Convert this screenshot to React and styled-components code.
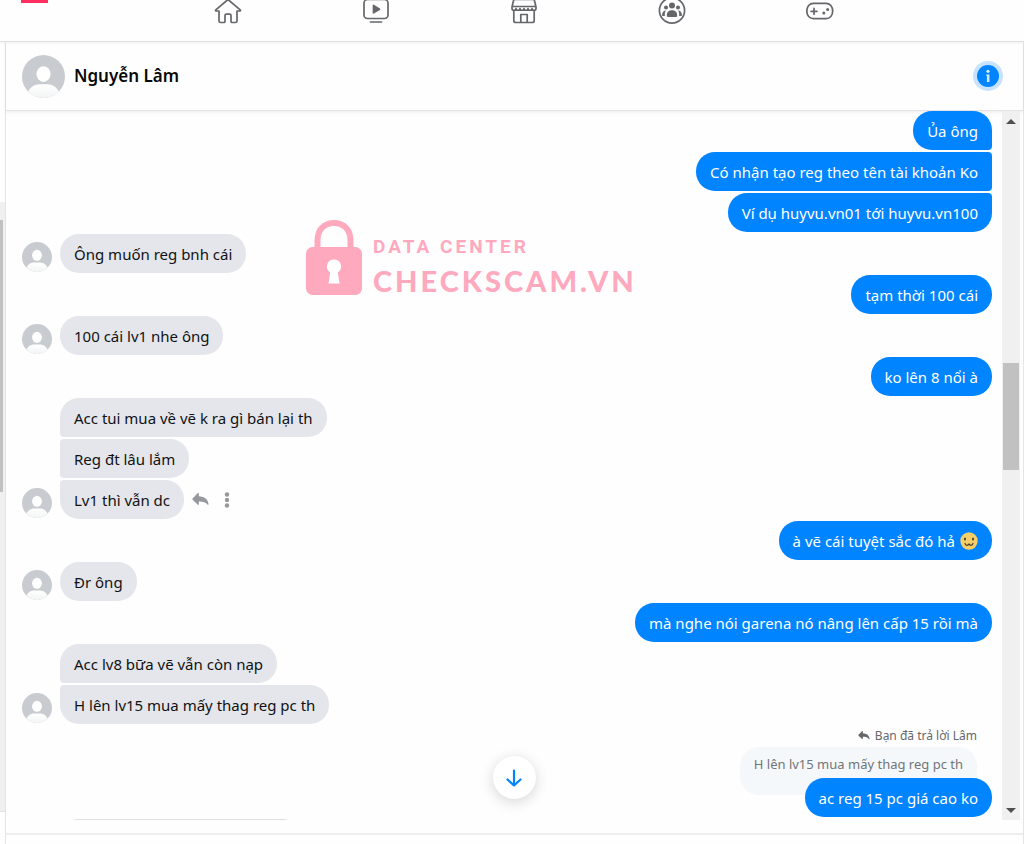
import React from "react";
import styled, { createGlobalStyle, css } from "styled-components";

const GlobalStyle = createGlobalStyle`
  * { box-sizing: border-box; }
  body {
    margin: 0;
    background: #fefefe;
    color: #111;
    font-family: "Noto Sans", "Open Sans", sans-serif;
    font-size: 15px;
  }
  button { font: inherit; border: 0; padding: 0; background: none; cursor: pointer; }
`;

const Page = styled.div`
  display: flex;
  flex-direction: column;
  height: 100vh;
  overflow: hidden;
`;

const TopBar = styled.header`
  display: grid;
  grid-template-columns: 1fr auto 1fr;
  align-items: start;
  height: 42px;
  flex: none;
  padding-left: 21px;
  border-bottom: 1px solid #e2e2e4;
  box-shadow: 0 1px 3px rgba(0, 0, 0, 0.06);
`;

const BrandStrip = styled.div`
  width: 27px;
  height: 3px;
  background: #ff2d60;
`;

const Nav = styled.nav`
  display: grid;
  grid-template-columns: repeat(5, 148px);
  grid-template-rows: 24px;
  align-items: end;
  padding-left: 3px;
`;

const NavLink = styled.a`
  display: flex;
  justify-content: center;
  height: 28px;
  color: #65676b;
`;

const NavIcon = styled.svg`
  width: 28px;
  height: 28px;
  fill: none;
  stroke: currentColor;
  stroke-width: 1.7;
  stroke-linecap: round;
  stroke-linejoin: round;
`;

const Body = styled.div`
  display: flex;
  flex: 1;
  min-height: 0;
`;

const Rail = styled.aside`
  width: 6px;
  flex: none;
  padding: 160px 0 32px;
  border-right: 1px solid #e4e4e6;
`;

const RailTrack = styled.div`
  height: 100%;
  padding-top: 18px;
  background: #f0f0f0;
  border-bottom: 1px solid #e2e2e2;
`;

const RailThumb = styled.div`
  width: 3px;
  height: 46%;
  background: #c1c1c1;
`;

const Chat = styled.main`
  display: flex;
  flex-direction: column;
  flex: 1;
  min-width: 0;
  border-right: 1px solid #e6e6e8;
`;

const ChatHeader = styled.div`
  display: flex;
  align-items: center;
  gap: 9px;
  height: 69px;
  flex: none;
  padding: 0 20px 0 16px;
  border-bottom: 1px solid #e4e4e6;
  box-shadow: 0 1px 3px rgba(0, 0, 0, 0.08);
`;

const Name = styled.h1`
  flex: 1;
  margin: 0;
  font-size: 17px;
  line-height: 24px;
  font-weight: 600;
  color: #080809;
`;

const InfoButton = styled.button`
  display: flex;
  width: 30px;
  height: 30px;
  border-radius: 50%;
  background: #c8e3ff;
  align-items: center;
  justify-content: center;
`;

const Conversation = styled.div`
  position: relative;
  display: flex;
  flex: 1;
  min-height: 0;
`;

const Messages = styled.div`
  display: flex;
  flex-direction: column;
  gap: 2px;
  flex: 1;
  min-width: 0;
  overflow: hidden;
  padding: 0 10px 0 16px;
`;

const Row = styled.div`
  display: flex;
  flex: none;
  align-items: flex-end;
  gap: 8px;
  justify-content: ${(p) => (p.$mine ? "flex-end" : "flex-start")};
`;

const AvatarSlot = styled.div`
  width: 30px;
  height: 30px;
  flex: none;
  margin-bottom: 1px;
`;

const corners = {
  single: () => "19px",
  first: (mine) => (mine ? "19px 19px 4px 19px" : "19px 19px 19px 4px"),
  middle: (mine) => (mine ? "19px 4px 4px 19px" : "4px 19px 19px 4px"),
  last: (mine) => (mine ? "19px 4px 19px 19px" : "4px 19px 19px 19px"),
};

const Bubble = styled.div`
  display: flex;
  align-items: center;
  gap: 5px;
  height: 39px;
  padding: 0 14px;
  line-height: 22px;
  white-space: nowrap;
  border-radius: ${(p) => corners[p.$place](p.$mine)};
  ${(p) =>
    p.$mine
      ? css`
          background: #0084ff;
          color: #fff;
          position: relative;
        `
      : css`
          background: #e4e6eb;
          color: #111214;
        `}
`;

const RowActions = styled.div`
  display: flex;
  align-items: center;
  gap: 13px;
  height: 39px;
  color: #96989b;
`;

const IconButton = styled.button`
  display: flex;
  color: inherit;
`;

const Reply = styled.div`
  display: flex;
  flex: none;
  flex-direction: column;
  align-items: flex-end;
`;

const ReplyLabel = styled.div`
  display: flex;
  align-items: center;
  gap: 5px;
  height: 19px;
  margin-right: 15px;
  font-size: 12px;
  color: #65676b;
`;

const Quote = styled.div`
  height: 48px;
  margin: 2px 15px -17px 0;
  padding: 7px 14px;
  border-radius: 19px;
  background: #f4f8fa;
  color: #727579;
  font-size: 13px;
  line-height: 20px;
  white-space: nowrap;
`;

const CardOutline = styled.div`
  flex: none;
  width: 242px;
  height: 60px;
  margin-left: 38px;
  border: 1px solid #dedede;
  border-radius: 19px;
`;

const Scrollbar = styled.div`
  display: flex;
  flex-direction: column;
  width: 18px;
  flex: none;
  margin-right: 3px;
  padding: 0 1px;
  background: #f0f0f0;
`;

const ScrollArrow = styled.button`
  display: flex;
  align-items: center;
  justify-content: center;
  height: 20px;
`;

const ScrollPart = styled.div`
  flex: ${(p) => p.$grow} 1 0;
  background: ${(p) => (p.$thumb ? "#c1c1c1" : "transparent")};
`;

const JumpButton = styled.button`
  position: absolute;
  bottom: 21px;
  left: calc(50% - 22px);
  display: flex;
  align-items: center;
  justify-content: center;
  width: 43px;
  height: 43px;
  border-radius: 50%;
  background: #fff;
  box-shadow: 0 3px 14px rgba(0, 0, 0, 0.16);
`;

const Composer = styled.footer`
  height: 24px;
  flex: none;
  padding-top: 13px;
`;

const ComposerRule = styled.div`
  height: 2px;
  background: #eeeeef;
`;

const Watermark = styled.div`
  position: absolute;
  top: 109px;
  left: 300px;
  display: flex;
  gap: 11px;
  color: #ffa9bf;
  pointer-events: none;
`;

const WatermarkText = styled.div`
  display: flex;
  flex-direction: column;
  padding-top: 16px;
`;

const WatermarkSmall = styled.span`
  font-family: Roboto, sans-serif;
  font-size: 19px;
  line-height: 22px;
  font-weight: 700;
  letter-spacing: 3px;
`;

const WatermarkLarge = styled.span`
  font-family: Lato, sans-serif;
  font-size: 29px;
  line-height: 46px;
  font-weight: 900;
  letter-spacing: 3px;
`;

function Avatar({ size }) {
  const id = "face" + size;
  return (
    <svg width={size} height={size} viewBox="0 0 44 44" aria-hidden="true">
      <defs>
        <clipPath id={id}>
          <circle cx="22" cy="22" r="22" />
        </clipPath>
        <linearGradient id={id + "fade"} x1="0" y1="0" x2="0" y2="1">
          <stop offset="0" stopColor="#fff" />
          <stop offset="1" stopColor="#f3f4f5" />
        </linearGradient>
      </defs>
      <g clipPath={`url(#${id})`}>
        <rect width="44" height="44" fill="#c8cbd0" />
        <ellipse cx="22" cy="19.500" rx="7.200" ry="8" fill="#fff" />
        <path d="M6 44V39c1.500-6 7-9 12-9h8c5 0 10.500 3 12 9v5z" fill={`url(#${id}fade)`} />
      </g>
    </svg>
  );
}

function ReplyArrow({ width, height }) {
  return (
    <svg width={width} height={height} viewBox="0 0 18 14" fill="currentColor" aria-hidden="true">
      <path d="M7.200.6v3c6.200.2 9.800 3.400 10.500 8.400-.1.800-.7.900-1.200.3-2.300-2.500-5-3.300-9.300-3.200v3c0 .7-.6.900-1.100.500L.5 7.200c-.4-.4-.4-.9 0-1.200L6.100.1c.5-.5 1.100-.2 1.100.5z" />
    </svg>
  );
}

function CatFace() {
  return (
    <svg width="18" height="18" viewBox="0 0 18 18" role="img" aria-label=":3">
      <circle cx="9" cy="9" r="8.700" fill="#f6cf68" />
      <ellipse cx="5" cy="7" rx="1" ry="1.500" fill="#4a3b2b" />
      <ellipse cx="13" cy="7" rx="1" ry="1.500" fill="#4a3b2b" />
      <path d="M5 11.300c.2 2.600 3.600 2.600 4 .4.400 2.200 3.800 2.200 4-.4" fill="none" stroke="#4a3b2b" strokeWidth="1.200" strokeLinecap="round" />
    </svg>
  );
}

const navItems = [
  {
    label: "Home",
    icon: (
      <path d="M14 3.500 1.800 13.800c-.5.500-.1 1.200.5 1.200H5v10c0 .9.600 1.500 1.500 1.500H10c.7 0 1-.4 1-1v-6c0-.8.500-1.300 1.300-1.300h3.400c.8 0 1.300.5 1.300 1.300v6c0 .6.300 1 1 1h3.500c.9 0 1.500-.6 1.500-1.500V15h2.700c.6 0 1-.7.500-1.200z" />
    ),
  },
  {
    label: "Watch",
    icon: (
      <>
        <rect x="2" y="3.500" width="24" height="19" rx="3.500" />
        <path d="M8.500 26h11" />
        <path d="M11.500 9.500v7.300l6-3.600z" fill="currentColor" />
      </>
    ),
  },
  {
    label: "Marketplace",
    icon: (
      <>
        <path d="M4 3.500h20M3.800 3.500 2 11v1.500c0 2.300 4 2.300 4 0 0 2.300 4 2.300 4 0 0 2.300 4 2.300 4 0 0 2.300 4 2.300 4 0 0 2.300 4 2.300 4 0 0 2.300 4 2.300 4 0V11l-1.800-7.500M2 10.500h24" />
        <path d="M3.800 15v9.500c0 1.200.8 2 2 2h16.400c1.200 0 2-.8 2-2V15M10.800 26v-7.500h6.400V26" />
      </>
    ),
  },
  {
    label: "Groups",
    icon: (
      <>
        <circle cx="14" cy="14.500" r="12.600" />
        <g fill="currentColor" stroke="none">
          <circle cx="14" cy="9.600" r="3" />
          <circle cx="8" cy="11.500" r="2" />
          <circle cx="20" cy="11.500" r="2" />
          <path d="M8.800 19.200c0-3.400 2.200-5 5.200-5s5.200 1.600 5.200 5c0 1.500-.6 1.900-2 1.900h-6.400c-1.400 0-2-.4-2-1.900zM7.900 14.600c-.9 1.300-1.300 3-1 5.400H5.200c-1 0-1.300-.5-1.100-1.500.4-2.500 1.700-3.900 3.800-3.900zM20.100 14.600c.9 1.300 1.300 3 1 5.400h1.700c1 0 1.300-.5 1.100-1.500-.4-2.500-1.700-3.900-3.800-3.900z" />
        </g>
      </>
    ),
  },
  {
    label: "Gaming",
    icon: (
      <>
        <path d="M7.500 7.300h12.500c4 0 6.700 3.300 6.700 7.700S24 22.700 20 22.700H7.500c-4 0-6.700-3.300-6.700-7.700S3.500 7.300 7.500 7.300z" />
        <path d="M8 12.300v6M5 15.300h6" />
        <g fill="currentColor" stroke="none">
          <circle cx="17.800" cy="17" r="1.500" />
          <circle cx="21.600" cy="13.400" r="1.500" />
        </g>
      </>
    ),
  },
];

const messages = [
  { text: "Ủa ông", mine: true, place: "first" },
  { text: "Có nhận tạo reg theo tên tài khoản Ko", mine: true, place: "middle" },
  { text: "Ví dụ huyvu.vn01 tới huyvu.vn100", mine: true, place: "last" },
  { text: "Ông muốn reg bnh cái", place: "single" },
  { text: "tạm thời 100 cái", mine: true, place: "single" },
  { text: "100 cái lv1 nhe ông", place: "single" },
  { text: "ko lên 8 nổi à", mine: true, place: "single" },
  { text: "Acc tui mua về vẽ k ra gì bán lại th", place: "first" },
  { text: "Reg đt lâu lắm", place: "middle" },
  { text: "Lv1 thì vẫn dc", place: "last", actions: true },
  { text: "à vẽ cái tuyệt sắc đó hả", mine: true, place: "single", emoji: true },
  { text: "Đr ông", place: "single" },
  { text: "mà nghe nói garena nó nâng lên cấp 15 rồi mà", mine: true, place: "single" },
  { text: "Acc lv8 bữa vẽ vẫn còn nạp", place: "first" },
  { text: "H lên lv15 mua mấy thag reg pc th", place: "last" },
];

function Message({ text, mine, place, emoji, actions }) {
  const showAvatar = place === "single" || place === "last";
  return (
    <Row $mine={mine}>
      {!mine && <AvatarSlot>{showAvatar && <Avatar size={30} />}</AvatarSlot>}
      <Bubble $mine={mine} $place={place}>
        {text}
        {emoji && <CatFace />}
      </Bubble>
      {actions && (
        <RowActions>
          <IconButton aria-label="Reply">
            <ReplyArrow width={17} height={13} />
          </IconButton>
          <IconButton aria-label="More">
            <svg width="10" height="16" viewBox="0 0 10 16" fill="currentColor">
              <circle cx="5" cy="2.500" r="2.200" />
              <circle cx="5" cy="8" r="2.200" />
              <circle cx="5" cy="13.500" r="2.200" />
            </svg>
          </IconButton>
        </RowActions>
      )}
    </Row>
  );
}

export default function App() {
  return (
    <Page>
      <GlobalStyle />
      <TopBar>
        <BrandStrip />
        <Nav>
          {navItems.map((item) => (
            <NavLink key={item.label} href="#" aria-label={item.label}>
              <NavIcon viewBox="0 0 28 28">{item.icon}</NavIcon>
            </NavLink>
          ))}
        </Nav>
      </TopBar>
      <Body>
        <Rail>
          <RailTrack>
            <RailThumb />
          </RailTrack>
        </Rail>
        <Chat>
          <ChatHeader>
            <Avatar size={43} />
            <Name>Nguyễn Lâm</Name>
            <InfoButton aria-label="Conversation information">
              <svg width="22" height="22" viewBox="0 0 22 22">
                <circle cx="11" cy="11" r="11" fill="#0084ff" />
                <circle cx="11" cy="6.300" r="1.600" fill="#d9edff" />
                <path d="M9.300 9.500h3.100v7.500H9.900v-6h-.6z" fill="#d9edff" />
              </svg>
            </InfoButton>
          </ChatHeader>
          <Conversation>
            <Messages>
              {messages.map((m) => (
                <Message key={m.text} {...m} />
              ))}
              <Reply>
                <ReplyLabel>
                  <ReplyArrow width={12} height={9} />
                  Bạn đã trả lời Lâm
                </ReplyLabel>
                <Quote>H lên lv15 mua mấy thag reg pc th</Quote>
                <Bubble $mine $place="single">
                  ac reg 15 pc giá cao ko
                </Bubble>
              </Reply>
              <CardOutline />
            </Messages>
            <Scrollbar>
              <ScrollArrow aria-label="Scroll up">
                <svg width="10" height="5" viewBox="0 0 10 5">
                  <path d="M0 5 5 0l5 5z" fill="#505050" />
                </svg>
              </ScrollArrow>
              <ScrollPart $grow={232} />
              <ScrollPart $grow={107} $thumb />
              <ScrollPart $grow={331} />
              <ScrollArrow aria-label="Scroll down">
                <svg width="10" height="5" viewBox="0 0 10 5">
                  <path d="M0 0h10L5 5z" fill="#505050" />
                </svg>
              </ScrollArrow>
            </Scrollbar>
            <Watermark>
              <svg width="56" height="75" viewBox="0 0 56 75" aria-hidden="true">
                <path d="M11.500 30V20.500C11.500 10 18 3 28 3s16.500 7 16.500 17.500V30" fill="none" stroke="currentColor" strokeWidth="6" />
                <rect y="27" width="56" height="48" rx="6.500" fill="currentColor" />
                <path d="M28 39.500a7 7 0 0 1 3.800 12.900L33.500 63.500h-11l1.700-11.100A7 7 0 0 1 28 39.500z" fill="#fff" />
              </svg>
              <WatermarkText>
                <WatermarkSmall>DATA CENTER</WatermarkSmall>
                <WatermarkLarge>CHECKSCAM.VN</WatermarkLarge>
              </WatermarkText>
            </Watermark>
            <JumpButton aria-label="Jump to latest message">
              <svg width="18" height="18" viewBox="0 0 18 18" fill="none" stroke="#0084ff" strokeWidth="2.200" strokeLinecap="round" strokeLinejoin="round">
                <path d="M9 1.500v15M2.500 10.500 9 16.500l6.500-6" />
              </svg>
            </JumpButton>
          </Conversation>
          <Composer>
            <ComposerRule />
          </Composer>
        </Chat>
      </Body>
    </Page>
  );
}
